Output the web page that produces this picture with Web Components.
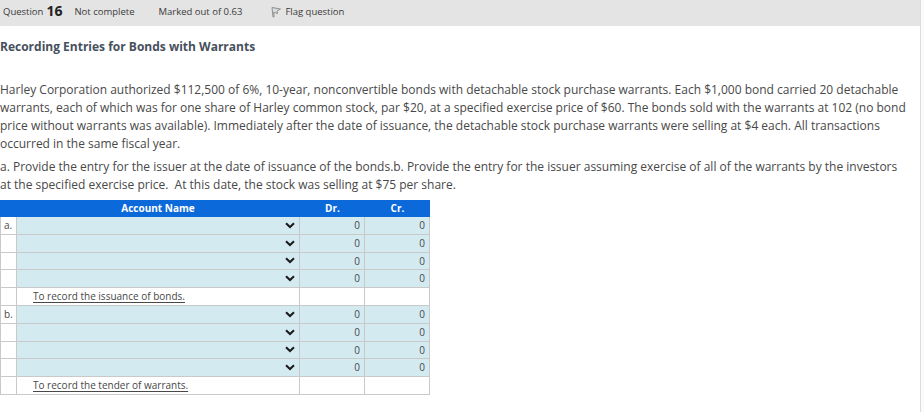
<!DOCTYPE html>
<html>
<head>
<meta charset="utf-8">
<style>
html, body { margin: 0; padding: 0; background: #fbfbfb; overflow: hidden; }
body { font-family: "Open Sans", sans-serif; color: #484848; width: 924px; height: 412px; }
</style>
</head>
<body>
<question-page></question-page>

<template id="head-tpl">
<style>
:host { display: flex; align-items: center; height: 26px; background: #e4e4e4; font-size: 9.5px; color: #3a3a3a; white-space: nowrap; box-sizing: border-box; padding: 0 0 3px 3px; }
b { font-size: 14px; font-weight: 700; color: #222; margin-left: 3px; margin-right: 12px; line-height: 20px; position: relative; top: -1px; }
.mark { margin-left: 24px; }
.flag { display: flex; align-items: center; margin-left: 29px; }
svg { margin-right: 4px; }
</style>
<span>Question</span><b>16</b><span>Not complete</span><span class="mark">Marked out of 0.63</span>
<span class="flag">
<svg width="10" height="12" viewBox="0 0 10 12"><path d="M1 1.5 L9.5 3 L6 5 L6.5 7.5 L2.8 6.2 L3 11 L2 11 Z" fill="#dcdcdc" stroke="#8f8f8f" stroke-width="1"/></svg>
Flag question</span>
</template>

<template id="sheet-tpl">
<style>
:host { display: grid; grid-template-columns: 17px 283px 65px 65px; width: 430px; font-size: 10px; color: #484848; }
</style>
<slot></slot>
</template>

<template id="hrow-tpl">
<style>
:host { display: contents; }
div { background: #0b69d9; color: #fff; font-weight: 700; font-size: 10px; height: 17px; line-height: 17px; text-align: center; }
.a { grid-column: 1 / span 2; }
.a span { position: relative; left: 8px; }
</style>
<div class="a"><span>Account Name</span></div><div>Dr.</div><div>Cr.</div>
</template>

<template id="row-tpl">
<style>
:host { display: contents; }
.c { box-sizing: border-box; height: 17.8px; border-bottom: 1px solid #c9c9c9; border-right: 1px solid #c9c9c9; }
.l { border-left: 1px solid #c9c9c9; padding-left: 3px; line-height: 17px; font-size: 10px; background: #fff; }
.f { background: #d4eaf1; }
.s { display: flex; align-items: center; justify-content: flex-end; padding-right: 4px; }
.n { text-align: right; padding-right: 4px; line-height: 17px; font-size: 10px; }
</style>
<div class="c l"></div>
<div class="c f s"><svg width="10" height="7" viewBox="0 0 10 7"><path d="M1 1.2 L5 5 L9 1.2" fill="none" stroke="#1a1a1a" stroke-width="2"/></svg></div>
<div class="c f n">0</div>
<div class="c f n">0</div>
</template>

<template id="note-tpl">
<style>
:host { display: contents; }
.c { box-sizing: border-box; height: 17.8px; border-bottom: 1px solid #c9c9c9; border-right: 1px solid #c9c9c9; background: #fff; }
.l { border-left: 1px solid #c9c9c9; }
.t { padding-left: 16px; line-height: 17px; white-space: nowrap; font-size: 10px; }
u { text-underline-offset: 2px; }
</style>
<div class="c l"></div><div class="c t"><u><slot></slot></u></div><div class="c"></div><div class="c"></div>
</template>

<script>
function mount(el, id){
    const root = el.attachShadow({mode: 'open'})
    root.appendChild(document.getElementById(id).content.cloneNode(true))
    return root
}

class QuestionHead extends HTMLElement{
    constructor(){ super(); mount(this, 'head-tpl') }
}
class EntrySheet extends HTMLElement{
    constructor(){ super(); mount(this, 'sheet-tpl') }
}
class SheetHead extends HTMLElement{
    constructor(){ super(); mount(this, 'hrow-tpl') }
}
class EntryRow extends HTMLElement{
    constructor(){
        super()
        const root = mount(this, 'row-tpl')
        root.querySelector('.l').textContent = this.getAttribute('label') || ''
    }
}
class EntryNote extends HTMLElement{
    constructor(){ super(); mount(this, 'note-tpl') }
}
class QuestionPage extends HTMLElement{
    constructor(){
        super()
        const root = this.attachShadow({mode: 'open'})
        const rows = (l) => `<entry-row label="${l}"></entry-row>` + '<entry-row></entry-row>'.repeat(3)
        root.innerHTML = `<style>
            :host{ display: block; box-sizing: border-box; width: 921px; height: 412px; background: #fff; border-right: 1px solid #dcdcdc; }
            h2{ margin: 13px 0 0; font-size: 12px; line-height: 16px; font-weight: 700; color: #46505c; }
            p{ margin: 0; font-size: 12px; line-height: 18px; color: #484848; width: 909px; }
            .one{ margin-top: 26px; }
            .two{ margin-top: 5px; }
            entry-sheet{ margin-top: 6px; }
        </style>
        <question-head></question-head>
        <h2>Recording Entries for Bonds with Warrants</h2>
        <p class="one">Harley Corporation authorized $112,500 of 6%, 10-year, nonconvertible bonds with detachable stock purchase warrants. Each $1,000 bond carried 20 detachable warrants, each of which was for one share of Harley common stock, par $20, at a specified exercise price of $60. The bonds sold with the warrants at 102 (no bond price without warrants was available). Immediately after the date of issuance, the detachable stock purchase warrants were selling at $4 each. All transactions occurred in the same fiscal year.</p>
        <p class="two">a. Provide the entry for the issuer at the date of issuance of the bonds.b. Provide the entry for the issuer assuming exercise of all of the warrants by the investors at the specified exercise price.&nbsp; At this date, the stock was selling at $75 per share.</p>
        <entry-sheet>
            <sheet-head></sheet-head>
            ${rows('a.')}
            <entry-note>To record the issuance of bonds.</entry-note>
            ${rows('b.')}
            <entry-note>To record the tender of warrants.</entry-note>
        </entry-sheet>`
    }
}

customElements.define('question-head', QuestionHead)
customElements.define('entry-sheet', EntrySheet)
customElements.define('sheet-head', SheetHead)
customElements.define('entry-row', EntryRow)
customElements.define('entry-note', EntryNote)
customElements.define('question-page', QuestionPage)
</script>
</body>
</html>
